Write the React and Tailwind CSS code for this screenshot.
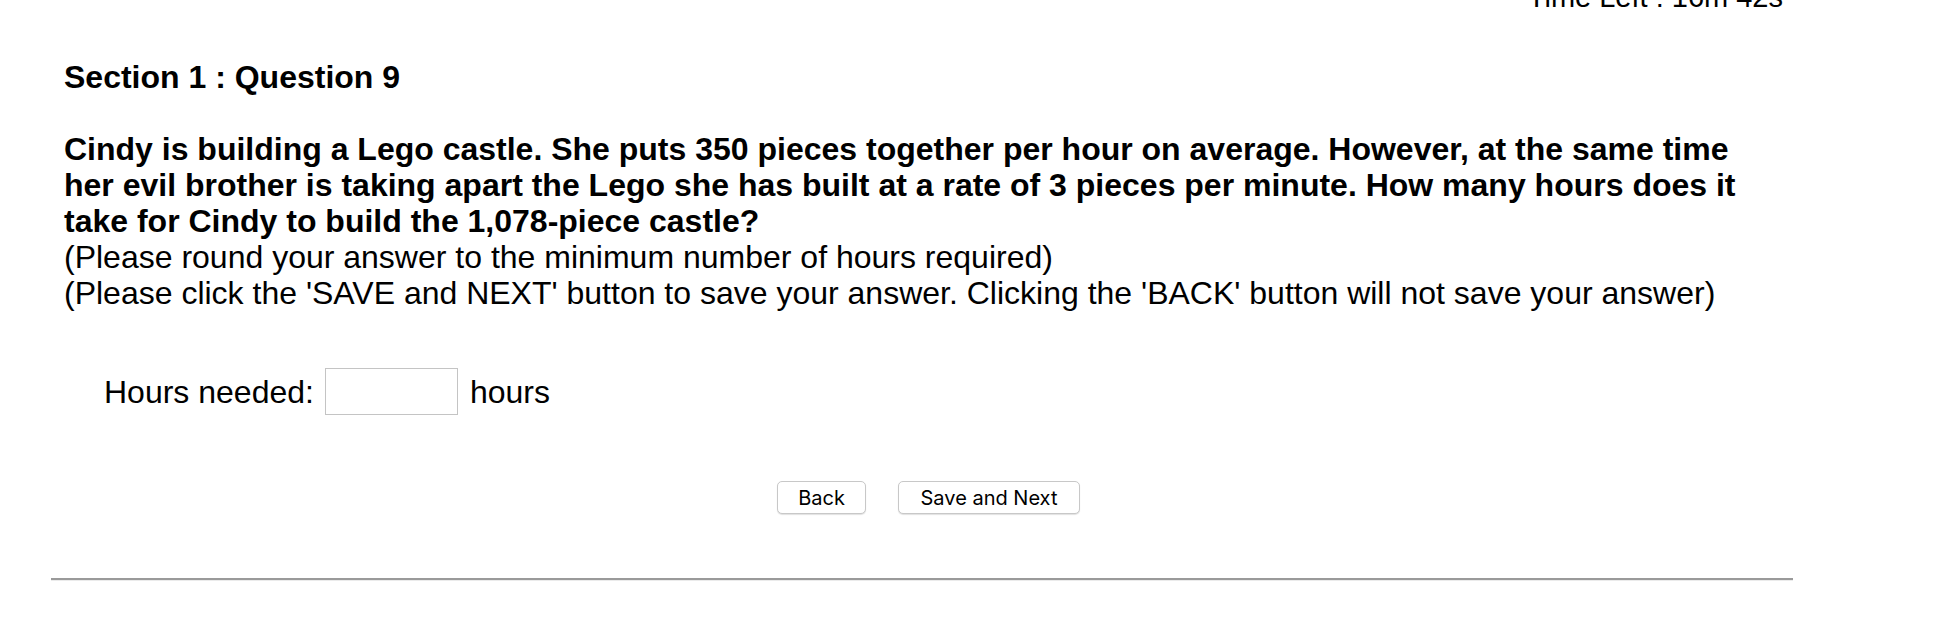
import { useState } from "react";

export default function App() {
  const [hours, setHours] = useState("");

  return (
    <div className="min-h-screen bg-white text-black font-['Liberation_Sans',Arial,sans-serif]">
      <div className="ml-[51px] w-[1742px]">
        {/* timer, scrolled mostly out of view */}
        <div className="h-[8px] overflow-hidden">
          <div className="-mt-[19px] pr-[10px] text-right text-[29px] leading-[33px]">
            Time Left : 16m 42s
          </div>
        </div>

        <div className="pl-[13px]">
          <h1 className="mt-[51px] text-[32px] font-bold leading-[36px]">
            Section 1 : Question 9
          </h1>

          <div className="mt-[36px] pr-[30px] text-[32px] leading-[36px]">
            <p className="font-bold">
              Cindy is building a Lego castle. She puts 350 pieces together per
              hour on average. However, at the same time her evil brother is
              taking apart the Lego she has built at a rate of 3 pieces per
              minute. How many hours does it take for Cindy to build the
              1,078-piece castle?
            </p>
            <p>(Please round your answer to the minimum number of hours required)</p>
            <p>
              (Please click the 'SAVE and NEXT' button to save your answer.
              Clicking the 'BACK' button will not save your answer)
            </p>
          </div>

          <div className="mt-[57px] flex h-[47px] items-center pl-[40px] text-[32px] leading-[36px]">
            <span>Hours needed:</span>
            <input
              type="text"
              value={hours}
              onChange={(e) => setHours(e.target.value)}
              className="ml-[11px] h-[47px] w-[133px] border border-[#c4c4c4] bg-white px-2 text-[24px] outline-none"
            />
            <span className="ml-[12px]">hours</span>
          </div>

          <div className="mt-[66px] flex justify-center gap-[32px] font-['Inter',sans-serif] text-[20px]">
            <button className="h-[33px] w-[89px] rounded-[5px] border border-[#c8c8c8] bg-white pt-px shadow-[0_1px_1px_rgba(0,0,0,0.12)]">
              Back
            </button>
            <button className="h-[33px] w-[182px] rounded-[5px] border border-[#c8c8c8] bg-white pt-px shadow-[0_1px_1px_rgba(0,0,0,0.12)]">
              Save and Next
            </button>
          </div>
        </div>

        <div className="mt-[64px]">
          <div className="h-[2px] bg-[#9a9a9a]" />
          <div className="h-px bg-[#ebebeb]" />
        </div>
      </div>
    </div>
  );
}
